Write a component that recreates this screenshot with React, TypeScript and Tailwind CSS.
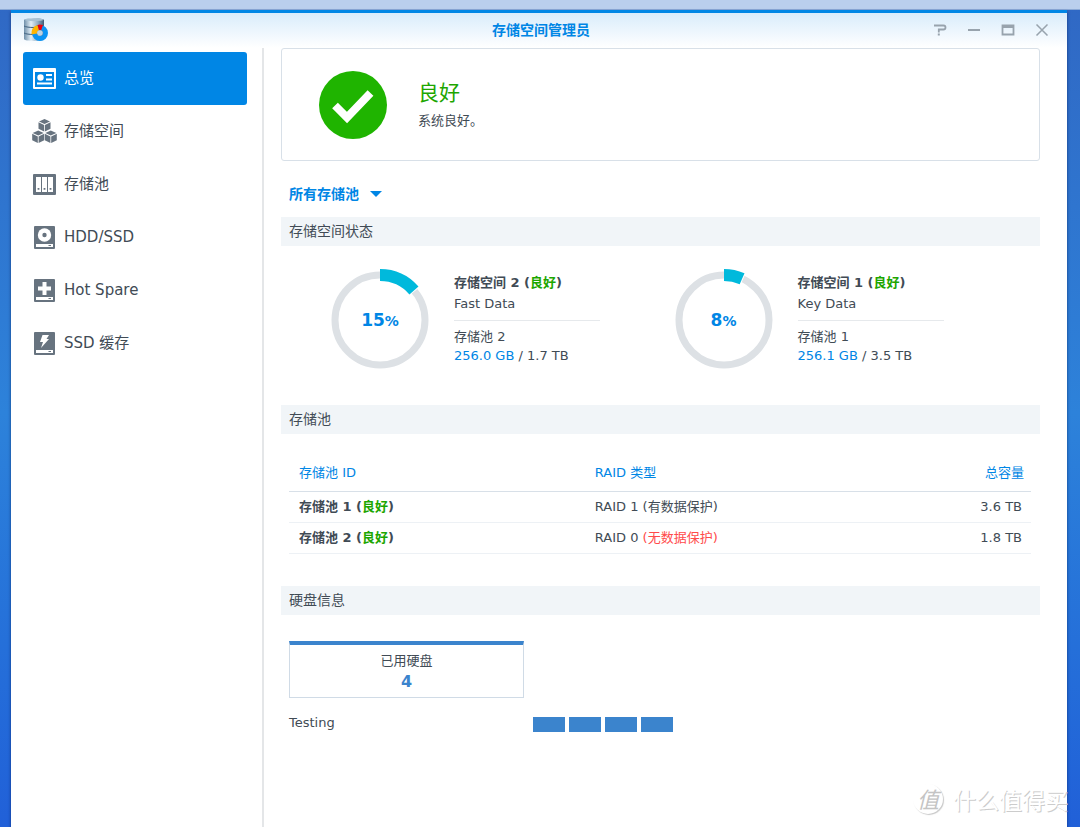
import type { ReactNode } from 'react';

const NAV_ITEMS = [
  { id: 'overview', label: '总览', icon: <OverviewIcon /> },
  { id: 'volume', label: '存储空间', icon: <VolumeIcon /> },
  { id: 'pool', label: '存储池', icon: <PoolIcon /> },
  {
    id: 'disk',
    label: 'HDD/SSD',
    icon: (
      <DriveIcon>
        <circle cx="12.5" cy="10" r="6.7" fill="#fff" />
        <circle cx="12.5" cy="10" r="2.2" fill="#67737f" />
      </DriveIcon>
    ),
  },
  {
    id: 'spare',
    label: 'Hot Spare',
    icon: (
      <DriveIcon>
        <path d="M10.5 4h4v4.5H19v4h-4.5V17h-4v-4.5H6v-4h4.5z" fill="#fff" />
      </DriveIcon>
    ),
  },
  {
    id: 'cache',
    label: 'SSD 缓存',
    icon: (
      <DriveIcon>
        <path d="M10.5 4h6.500l-2.500 4h2.500L9 17l2-6H8z" fill="#fff" />
      </DriveIcon>
    ),
  },
];

const VOLUMES = [
  { id: 2, name: 'Fast Data', percent: 15, used: '256.0 GB', total: '1.7 TB', pool: 2 },
  { id: 1, name: 'Key Data', percent: 8, used: '256.1 GB', total: '3.5 TB', pool: 1 },
];

const POOLS = [
  { id: 1, raid: 'RAID 1', note: '(有数据保护)', isProtected: true, size: '3.6 TB' },
  { id: 2, raid: 'RAID 0', note: '(无数据保护)', isProtected: false, size: '1.8 TB' },
];

const DISK_BAYS = [1, 2, 3, 4];

function OverviewIcon() {
  return (
    <svg width="25" height="25" viewBox="0 0 25 25">
      <rect x="1" y="2" width="23" height="21" rx="1" fill="#fff" />
      <rect x="3" y="6" width="19" height="15" fill="#0086e5" />
      <circle cx="8.5" cy="11.5" r="3.2" fill="#fff" />
      <path d="M14 8h6v2h-6zM14 12.500h6v2h-6zM5 16.500h15v2H5z" fill="#fff" />
    </svg>
  );
}

function Cube({ x, y }: { x: number; y: number }) {
  return (
    <g transform={`translate(${x} ${y})`} fill="#67737f">
      <path d="M6 0l5.500 2.400L6 5 .5 2.400z" />
      <path d="M0 3.300l5.600 2.700V12.500L0 9.800z" />
      <path d="M12 3.300L6.400 6V12.500L12 9.800z" />
    </g>
  );
}

function VolumeIcon() {
  return (
    <svg width="25" height="25" viewBox="0 0 25 25">
      <Cube x={6.5} y={0} />
      <Cube x={0.2} y={11.5} />
      <Cube x={12.8} y={11.5} />
    </svg>
  );
}

function PoolIcon() {
  return (
    <svg width="25" height="25" viewBox="0 0 25 25">
      <rect x="1" y="2" width="23" height="21" rx="1" fill="#67737f" />
      <path d="M4 5h5v15H4zM10 5h5v15h-5zM16 5h5v15h-5z" fill="#fff" />
      <path d="M5.600 16h1.800v1.800H5.600zM11.600 16h1.800v1.800h-1.800zM17.600 16h1.800v1.800h-1.800z" fill="#67737f" />
    </svg>
  );
}

function DriveIcon({ children }: { children: ReactNode }) {
  return (
    <svg width="25" height="25" viewBox="0 0 25 25">
      <rect x="2" y="1" width="21" height="23" rx="1" fill="#67737f" />
      {children}
      <path d="M4 19h17v3H4z" fill="#fff" />
      <path d="M16.500 20h2.500v1h-2.500z" fill="#67737f" />
    </svg>
  );
}

function AppIcon() {
  return (
    <svg width="26" height="26" viewBox="0 0 26 26">
      <defs>
        <linearGradient id="cylinder">
          <stop offset="0" stopColor="#6f8fa9" />
          <stop offset="0.35" stopColor="#e2eef6" />
          <stop offset="0.7" stopColor="#8fabc1" />
          <stop offset="1" stopColor="#3c5a75" />
        </linearGradient>
      </defs>
      <path d="M1 3c0-2.500 20-2.500 20 0v19c0 2.500-20 2.500-20 0z" fill="url(#cylinder)" />
      <path d="M1 9c3 2 17 2 20 0M1 16c3 2 17 2 20 0" fill="none" stroke="#3f617f" strokeWidth="1" />
      <ellipse cx="11" cy="2.800" rx="9.500" ry="1.500" fill="#a9c2d4" />
      <circle cx="17" cy="16" r="5.500" fill="none" stroke="#0a94f4" strokeWidth="5" />
      <path d="M8.500 17.500a8.500 8.500 0 0 1 6-9.600l1.500 5.300a3 3 0 0 0-2 3.300z" fill="#ffb400" />
      <path d="M14.500 7.900a8.500 8.500 0 0 1 5.500.2l-1.800 5.200a3 3 0 0 0-2.200-.1z" fill="#e60012" />
      <circle cx="17" cy="16" r="2.800" fill="#b9d3e6" />
    </svg>
  );
}

function HeaderButton({ label, children }: { label: string; children: ReactNode }) {
  return (
    <button type="button" aria-label={label} className="flex h-7 w-[34px] items-center justify-center">
      <svg width="14" height="12" viewBox="0 0 14 12" fill="none" stroke="#98a3ad" strokeWidth="1.5">
        {children}
      </svg>
    </button>
  );
}

function SectionTitle({ children }: { children: ReactNode }) {
  return <h2 className="h-[29px] bg-[#f1f5f8] px-2 py-1 text-sm leading-[21px]">{children}</h2>;
}

function Healthy() {
  return <span className="text-[#1da600]">良好</span>;
}

function UsageRing({ percent }: { percent: number }) {
  const length = 2 * Math.PI * 45;
  const filled = (length * percent) / 100 - 4;
  return (
    <div className="relative flex size-[102px] shrink-0 items-center justify-center pt-[2px]">
      <svg className="absolute inset-0" width="102" height="102" viewBox="0 0 102 102" fill="none">
        <circle cx="51" cy="51" r="45" stroke="#dde1e5" strokeWidth="7" />
        <g transform="rotate(-90 51 51)">
          <circle cx="51" cy="51" r="45" stroke="#fff" strokeWidth="12" strokeDasharray={`${filled + 1} ${length}`} />
          <circle cx="51" cy="51" r="45" stroke="#00b9dc" strokeWidth="12" strokeDasharray={`${filled} ${length}`} />
        </g>
      </svg>
      <span className="relative text-[17px] font-bold text-[#0086e5]">
        {percent}
        <span className="text-sm">%</span>
      </span>
    </div>
  );
}

function TitleBar() {
  return (
    <header className="grid h-[35px] grid-cols-[1fr_auto_1fr] items-center bg-linear-to-b from-[#d9ecfb] to-white pr-2 pb-[2px] pl-3">
      <AppIcon />
      <h1 className="text-sm font-bold text-[#0086e5]">存储空间管理员</h1>
      <div className="flex justify-end">
        <HeaderButton label="帮助">
          <path d="M1 1.500h9.500q2 0 2 2t-2 2H5.800v3M4.800 10.500H6.800" strokeWidth="1.800" />
        </HeaderButton>
        <HeaderButton label="最小化">
          <path d="M1 6h12" strokeWidth="2" />
        </HeaderButton>
        <HeaderButton label="最大化">
          <path d="M1.500 1.500h11v9h-11zM1 3h12" strokeWidth="1.800" />
        </HeaderButton>
        <HeaderButton label="关闭">
          <path d="M1.500.500l11 11M12.500.500l-11 11" />
        </HeaderButton>
      </div>
    </header>
  );
}

function Sidebar() {
  return (
    <nav className="w-[253px] shrink-0 border-r-2 border-[#e4e6e8] pt-1 pr-[15px] pl-3">
      {NAV_ITEMS.map(item => (
        <button
          key={item.id}
          type="button"
          className={
            item.id === 'overview'
              ? 'flex h-[53px] w-full items-center gap-[7px] rounded-[3px] bg-[#0086e5] pl-[9px] text-[15px] text-white'
              : 'flex h-[53px] w-full items-center gap-[7px] rounded-[3px] pl-[9px] text-[15px]'
          }
        >
          {item.icon}
          {item.label}
        </button>
      ))}
    </nav>
  );
}

export default function App() {
  return (
    <div className="relative flex h-screen flex-col overflow-hidden bg-linear-to-b from-[#3068c4] via-[#2d82da] to-[#2160d8] font-['DejaVu_Sans','Noto_Sans_CJK_SC',sans-serif] text-[13px] text-[#414b55]">
      <div className="h-[10px] shrink-0 border-b border-[#8ba9d6] bg-[#bacfed]" />
      <div className="mr-[13px] ml-[11px] flex min-h-0 flex-1 flex-col border-t-3 border-[#0086e5] bg-white shadow-[0_2px_3px_rgba(0,20,70,0.6)]">
        <TitleBar />
        <div className="flex min-h-0 flex-1">
          <Sidebar />
          <main className="min-w-0 flex-1 pr-[27px] pl-[17px]">
            <section className="flex h-[113px] items-center gap-[31px] rounded-[3px] border border-[#d8e0e8] pl-[37px]">
              <svg width="68" height="68" viewBox="0 0 68 68">
                <circle cx="34" cy="34" r="34" fill="#1fb400" />
                <path d="M16 34.500L28 46.500 51.500 22" fill="none" stroke="#fff" strokeWidth="8" />
              </svg>
              <div>
                <div className="text-[21px] leading-8 text-[#1da600]">良好</div>
                <div className="leading-6">系统良好。</div>
              </div>
            </section>

            <div className="relative mt-[19px] mb-[10px] flex h-[27px] items-center pl-2">
              <select aria-label="存储池筛选" className="w-24 appearance-none text-sm font-bold text-[#0086e5]">
                <option>所有存储池</option>
              </select>
              <svg className="pointer-events-none absolute left-[89px]" width="12" height="6" viewBox="0 0 12 6">
                <path d="M0 0h12L6 6z" fill="#0086e5" />
              </svg>
            </div>

            <SectionTitle>存储空间状态</SectionTitle>
            <div className="grid grid-cols-2 px-9 pt-[23px] pb-[34px]">
              {VOLUMES.map(volume => (
                <div key={volume.id} className="flex items-center gap-[23px] pl-3">
                  <UsageRing percent={volume.percent} />
                  <div className="w-[146px] pb-[4px] whitespace-nowrap">
                    <div className="leading-[21px] font-bold">
                      存储空间 {volume.id} (<Healthy />)
                    </div>
                    <div className="border-b border-[#e6e9ec] pb-[6px] leading-[21px]">{volume.name}</div>
                    <div className="pt-[6px] leading-[19px]">存储池 {volume.pool}</div>
                    <div className="leading-[19px]">
                      <span className="text-[#0086e5]">{volume.used}</span> / {volume.total}
                    </div>
                  </div>
                </div>
              ))}
            </div>

            <SectionTitle>存储池</SectionTitle>
            <div className="pt-5 pr-[9px] pb-8 pl-2">
              <table className="w-full table-fixed">
                <thead>
                  <tr className="h-[37px] border-b border-[#d8e0e8] text-[#0086e5]">
                    <th className="w-2/5 pl-[10px] text-left font-normal">存储池 ID</th>
                    <th className="w-2/5 pl-[9px] text-left font-normal">RAID 类型</th>
                    <th className="pr-[7px] text-right font-normal">总容量</th>
                  </tr>
                </thead>
                <tbody>
                  {POOLS.map(pool => (
                    <tr key={pool.id} className="h-[31px] border-b border-[#edf1f5]">
                      <td className="pl-[10px] font-bold">
                        存储池 {pool.id} (<Healthy />)
                      </td>
                      <td className="pl-[9px]">
                        {pool.raid} <span className={pool.isProtected ? '' : 'text-[#ff4b4b]'}>{pool.note}</span>
                      </td>
                      <td className="pr-[9px] text-right">{pool.size}</td>
                    </tr>
                  ))}
                </tbody>
              </table>
            </div>

            <SectionTitle>硬盘信息</SectionTitle>
            <div className="pt-[26px] pl-2">
              <div className="h-[57px] w-[235px] border border-t-4 border-[#d0dbe6] border-t-[#3b84cd] pt-[5px] text-center">
                <div className="leading-[22px]">已用硬盘</div>
                <div className="text-base leading-5 font-bold text-[#3b84cd]">4</div>
              </div>
              <div className="flex items-start pt-[15px]">
                <div className="w-[244px] leading-5">Testing</div>
                <div className="flex gap-1 pt-1">
                  {DISK_BAYS.map(bay => (
                    <div key={bay} className="h-[15px] w-8 bg-[#3b84cd]" />
                  ))}
                </div>
              </div>
            </div>
          </main>
        </div>
      </div>

      <div className="pointer-events-none absolute right-3 bottom-[11px] flex items-center gap-[10px] font-['Noto_Sans_CJK_SC',sans-serif] whitespace-nowrap">
        <span className="flex size-[30px] items-center justify-center rounded-full text-[22px] text-[#c4c4c4] italic shadow-[1px_1px_1px_#c8c8c8]">
          值
        </span>
        <span className="text-[23px] text-white [text-shadow:1px_1px_0_#cccccc]">什么值得买</span>
      </div>
    </div>
  );
}
